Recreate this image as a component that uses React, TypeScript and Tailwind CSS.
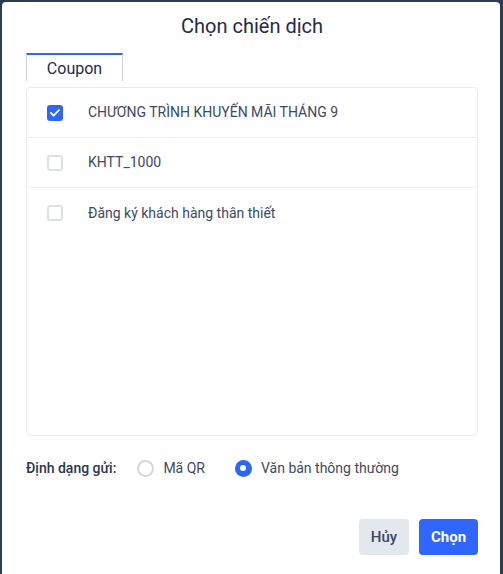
import { useState } from "react";

const campaigns = [
  "CHƯƠNG TRÌNH KHUYẾN MÃI THÁNG 9",
  "KHTT_1000",
  "Đăng ký khách hàng thân thiết",
];

function CheckBox({ checked }: { checked: boolean }) {
  return checked ? (
    <span className="flex h-4 w-4 items-center justify-center rounded-[3px] bg-[#2f66f6]">
      <svg width="10" height="8" viewBox="0 0 10 8" fill="none">
        <path
          d="M1 4l2.6 2.6L9 1.2"
          stroke="white"
          strokeWidth="1.8"
          strokeLinecap="round"
          strokeLinejoin="round"
        />
      </svg>
    </span>
  ) : (
    <span className="block h-4 w-4 rounded-[3px] border-2 border-[#dcdfe4] bg-white" />
  );
}

function Radio({ checked }: { checked: boolean }) {
  return checked ? (
    <span className="flex h-[17px] w-[17px] items-center justify-center rounded-full bg-[#2f66f6]">
      <span className="h-[6px] w-[6px] rounded-full bg-white" />
    </span>
  ) : (
    <span className="block h-[17px] w-[17px] rounded-full border-2 border-[#d3d6db] bg-white" />
  );
}

export default function App() {
  const [selected, setSelected] = useState<number[]>([0]);
  const [format, setFormat] = useState("text");

  const toggle = (i: number) =>
    setSelected((s) => (s.includes(i) ? s.filter((x) => x !== i) : [...s, i]));

  return (
    <div
      className="h-[574px] w-[503px] overflow-hidden bg-[#2c3d52] pl-[2px] pr-[3px] pt-[2px]"
      style={{ fontFamily: "Roboto, 'Noto Sans', sans-serif" }}
    >
      <div className="h-[600px] rounded-[4px] bg-white pl-[24px] pr-[22px]">
        <h2 className="pt-[11px] text-center text-[20px] leading-[26px] font-normal text-[#1f2b48]">
          Chọn chiến dịch
        </h2>

        {/* tab */}
        <div className="mt-[14px] flex">
          <div className="flex h-[28px] w-[97px] items-center justify-center border-x border-t-2 border-x-[#cfd3d8] border-t-[#2f66f6] pt-[2px] text-[16px] font-normal text-[#1f2b48]">
            Coupon
          </div>
        </div>

        {/* list */}
        <div className="mt-[6px] h-[349px] rounded-[4px] border border-[#e9ebee]">
          {campaigns.map((name, i) => (
            <div
              key={name}
              onClick={() => toggle(i)}
              className="flex h-[50px] cursor-pointer items-center border-b border-[#eceef1] pl-[20px] last:border-b-0"
            >
              <CheckBox checked={selected.includes(i)} />
              <span className="ml-[25px] text-[14px] text-[#3d4a64]">{name}</span>
            </div>
          ))}
        </div>

        {/* format */}
        <div className="mt-[22px] flex h-[20px] items-center text-[14px]">
          <span className="font-medium text-[#2a3651]">Định dạng gửi:</span>
          <label
            className="ml-[21px] flex cursor-pointer items-center"
            onClick={() => setFormat("qr")}
          >
            <Radio checked={format === "qr"} />
            <span className="ml-[9px] text-[#3d4a64]">Mã QR</span>
          </label>
          <label
            className="ml-[30px] flex cursor-pointer items-center"
            onClick={() => setFormat("text")}
          >
            <Radio checked={format === "text"} />
            <span className="ml-[9px] text-[#3d4a64]">Văn bản thông thường</span>
          </label>
        </div>

        {/* actions */}
        <div className="mt-[41px] flex justify-end gap-[10px]">
          <button className="h-[36px] w-[50px] rounded-[4px] bg-[#e3e8ee] text-[15px] font-medium text-[#3a4762]">
            Hủy
          </button>
          <button className="h-[36px] w-[59px] rounded-[4px] bg-[#2f66ff] text-[15px] font-bold text-white">
            Chọn
          </button>
        </div>
      </div>
    </div>
  );
}
